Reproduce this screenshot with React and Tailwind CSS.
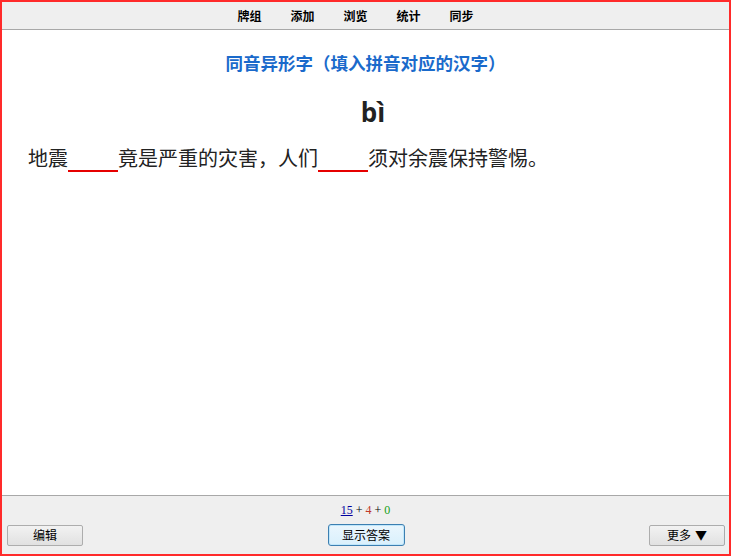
import React from "react";

const cjk = { fontFamily: '"Noto Sans CJK SC", "Noto Sans", sans-serif' };

function Blank() {
  return <span className="inline-block w-[50px] h-[24px] border-b-2 border-[#e60000] align-baseline translate-y-[6px]" />;
}

export default function App() {
  return (
    <div className="w-[731px] h-[556px] border-2 border-[#ff2a2a] flex flex-col bg-white" style={cjk}>
      <div className="h-[28px] bg-[#efefef] border-b border-[#a8a8a8] flex items-center justify-center gap-[29px] text-[12px] font-bold text-black pt-[1px] pr-[20px]">
        <span>牌组</span>
        <span>添加</span>
        <span>浏览</span>
        <span>统计</span>
        <span>同步</span>
      </div>
      <div className="flex-1 flex flex-col">
        <div className="mt-[21px] text-center text-[17.5px] leading-[24px] font-bold text-[#1a6acb]">同音异形字（填入拼音对应的汉字）</div>
        <div className="mt-[20px] pl-[15px] text-center text-[26px] leading-[34px] font-bold text-[#222]" style={{ fontFamily: '"Open Sans", "Noto Sans", sans-serif' }}>bì</div>
        <div className="mt-[13px] pl-[26px] text-[20px] leading-[28px] text-[#222]">
          地震<Blank />竟是严重的灾害，人们<Blank />须对余震保持警惕。
        </div>
      </div>
      <div className="h-[59px] bg-[#efefef] border-t border-[#a8a8a8] flex flex-col">
        <div className="mt-[6px] text-center text-[12px] leading-[16px]" style={{ fontFamily: '"Liberation Serif", serif' }}>
          <span className="text-[#0000a0] underline">15</span>
          <span className="text-black"> + </span>
          <span className="text-[#c0392b]">4</span>
          <span className="text-black"> + </span>
          <span className="text-[#14a014]">0</span>
        </div>
        <div className="mt-[6px] flex items-center justify-between px-[5px]">
          <button className="w-[76px] h-[21px] text-[12px] text-black border border-[#adadad] rounded-[2px] bg-gradient-to-b from-[#f2f2f2] to-[#e1e1e1]">编辑</button>
          <button className="w-[77px] h-[22px] text-[12px] text-black border border-[#3c7fb1] rounded-[3px] bg-gradient-to-b from-[#eaf6fd] to-[#d9f0fc] shadow-[inset_0_0_0_1px_#bfe6fb]">显示答案</button>
          <button className="w-[76px] h-[21px] text-[12px] text-black border border-[#adadad] rounded-[2px] bg-gradient-to-b from-[#f2f2f2] to-[#e1e1e1] mr-[-1px] flex items-center justify-center gap-[4px]"><span>更多</span><span>▼</span></button>
        </div>
      </div>
    </div>
  );
}
